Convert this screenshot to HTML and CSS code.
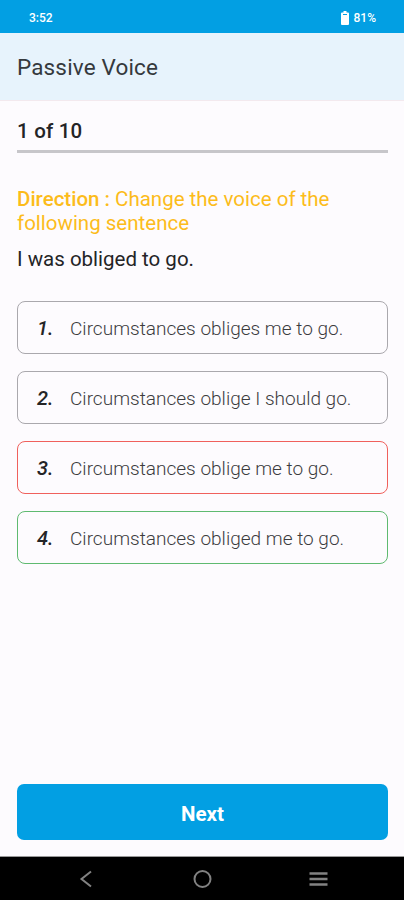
FILE: index.html
```
<!DOCTYPE html>
<html lang="en">
<head>
  <meta charset="UTF-8" />
  <meta name="viewport" content="width=device-width, initial-scale=1.0"/>
  <title>Passive Voice</title>
  <link rel="stylesheet" href="styles.css">
</head>
<body>

<div class="screen">
  <div class="status-bar">
    <span class="time">3:52</span>
    <div class="battery">
      <svg width="8" height="14" viewBox="0 0 8 14">
        <path d="M2.5 0h3v1.500H7a1 1 0 0 1 1 1V13a1 1 0 0 1-1 1H1a1 1 0 0 1-1-1V2.500a1 1 0 0 1 1-1h1.500z" fill="#fff"/>
        <path d="M2 3.500h4" stroke="#029fe3" stroke-width="1"/>
      </svg>
      <span>81%</span>
    </div>
  </div>

  <header class="header">
    <h1>Passive Voice</h1>
  </header>

  <main class="quiz">
    <div class="count">1 of 10</div>
    <div class="progress"></div>
    <p class="direction"><b>Direction :</b> <span>Change the voice of the</span><br><span>following sentence</span></p>
    <p class="question">I was obliged to go.</p>

    <div class="options">
      <div class="option"><span class="number">1.</span><span class="answer">Circumstances obliges me to go.</span></div>
      <div class="option"><span class="number">2.</span><span class="answer">Circumstances oblige I should go.</span></div>
      <div class="option wrong"><span class="number">3.</span><span class="answer">Circumstances oblige me to go.</span></div>
      <div class="option correct"><span class="number">4.</span><span class="answer">Circumstances obliged me to go.</span></div>
    </div>

    <button type="button" class="next">Next</button>
  </main>

  <nav class="nav-bar">
    <svg width="20" height="20" viewBox="0 0 20 20"><path d="M15 2.500L5.500 10l9.500 7.500" fill="none" stroke="#828282" stroke-width="2"/></svg>
    <svg width="20" height="20" viewBox="0 0 20 20"><circle cx="10.500" cy="10" r="8" fill="none" stroke="#828282" stroke-width="2"/></svg>
    <svg width="20" height="20" viewBox="0 0 20 20"><path d="M1.500 4.500h18M1.500 10h18M1.500 15.500h18" fill="none" stroke="#828282" stroke-width="2.5"/></svg>
  </nav>
</div>

</body>
</html>
```
FILE: styles.css
```
* {
  box-sizing: border-box;
}
body {
  font-family: Roboto, Arial, sans-serif;
  margin: 0;
  color: #242426;
}
.screen {
  height: 900px;
  display: flex;
  flex-direction: column;
  background: #fdfbfe;
}
.status-bar {
  height: 33px;
  padding: 2px 28px 0 29px;
  display: flex;
  align-items: center;
  justify-content: space-between;
  background: #029fe3;
  color: #fff;
  font-size: 12px;
  font-weight: 500;
}
.battery {
  display: flex;
  align-items: center;
  gap: 5px;
}
.header {
  height: 68px;
  padding: 0 17px;
  display: flex;
  align-items: center;
  background: #e7f3fc;
  border-bottom: 1px solid #f3e9ee;
}
h1 {
  margin: 0;
  font-size: 22.5px;
  font-weight: 400;
  letter-spacing: 0.15px;
  color: #35393d;
}
.quiz {
  flex: 1;
  display: flex;
  flex-direction: column;
  padding: 18px 16px 16px 17px;
}
.count {
  font-size: 20.5px;
  line-height: 24px;
  font-weight: 500;
  letter-spacing: 0.2px;
}
.progress {
  height: 3px;
  margin-top: 7px;
  background: #c7c6ca;
}
.direction {
  margin: 34px 0 0;
  color: #fcbc1b;
  font-size: 20.5px;
  line-height: 24px;
}
.direction b {
  font-weight: 500;
}
.question {
  margin: 12px 0 0;
  font-size: 20.5px;
  line-height: 24px;
}
.options {
  display: flex;
  flex-direction: column;
  gap: 17px;
  margin-top: 30px;
}
.option {
  height: 53px;
  padding: 1px 0 0 19px;
  display: flex;
  align-items: center;
  border: 1px solid #aaa8ad;
  border-radius: 8px;
}
.wrong {
  border-color: #f0605c;
}
.correct {
  border-color: #5fba70;
}
.number {
  width: 33px;
  font-size: 20px;
  font-weight: 500;
  font-style: italic;
}
.answer {
  color: #3c3c3e;
  font-size: 19.05px;
  font-weight: 300;
  white-space: nowrap;
}
.next {
  height: 56px;
  margin-top: auto;
  padding: 3px 0 0;
  border: none;
  border-radius: 7px;
  background: #029fe3;
  color: #fff;
  font-family: inherit;
  font-size: 20.5px;
  font-weight: 700;
}
.nav-bar {
  height: 44px;
  display: flex;
  align-items: center;
  justify-content: space-around;
  padding: 0 28px;
  background: #000;
  border-top: 1px solid #999;
}
```
